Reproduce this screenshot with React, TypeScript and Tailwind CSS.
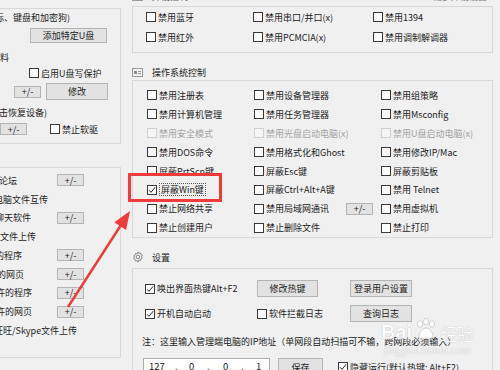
import type { ReactNode } from "react";

function Box({ on, off }: { on?: boolean; off?: boolean }) {
  return (
    <span
      className={`flex h-[10px] w-[10px] shrink-0 items-center justify-center border ${
        off ? "border-[#cfcfcf] bg-[#f5f5f5]" : "border-[#3a3a3a] bg-white"
      }`}
    >
      {on && (
        <svg width="8" height="8" viewBox="0 0 8 8">
          <path d="M1 4.2 3 6.3 7.2 1.2" fill="none" stroke="#2a2a2a" strokeWidth="1" />
        </svg>
      )}
    </span>
  );
}

function Check({
  label,
  on,
  off,
  focus,
}: {
  label: string;
  on?: boolean;
  off?: boolean;
  focus?: boolean;
}) {
  return (
    <div className="flex h-full items-center gap-[2px] whitespace-nowrap">
      <Box on={on} off={off} />
      <span
        className={`${off ? "text-[#a3a3a3]" : ""} ${
          focus ? "border border-dotted border-[#555] px-[1px] py-[1px]" : ""
        }`}
      >
        {label}
      </span>
    </div>
  );
}

function Btn({ children, className }: { children: ReactNode; className: string }) {
  return (
    <div
      className={`flex shrink-0 items-center justify-center border border-[#b4b4b4] bg-[#e2e2e2] text-[#222] ${className}`}
    >
      {children}
    </div>
  );
}

const Pm = () => <Btn className="h-[12px] w-[27px]">+/-</Btn>;

function LeftColumn() {
  const rows: { t: string; ml: string; pm?: boolean }[] = [
    { t: "论坛", ml: "ml-[-1px]", pm: true },
    { t: "电脑文件互传", ml: "ml-[-6px]" },
    { t: "聊天软件", ml: "ml-[-5px]", pm: true },
    { t: "文件上传", ml: "ml-[0px]" },
    { t: "的程序", ml: "ml-[-5px]", pm: true },
    { t: "的网页", ml: "ml-[-3px]", pm: true },
    { t: "许的程序", ml: "ml-[-4px]", pm: true },
    { t: "许的网页", ml: "ml-[-4px]", pm: true },
    { t: "旺旺/Skype文件上传", ml: "ml-[-6px]" },
  ];
  return (
    <div className="w-[121px] shrink-0 pt-[8px]">
      <div className="h-[136px] border-y border-r border-[#d8d8d8]">
        <div className="flex h-[16px] items-center whitespace-nowrap">
          <span className="ml-[-14px]">鼠标、键盘和加密狗)</span>
        </div>
        <Btn className="ml-[30px] mt-[3px] h-[15px] w-[77px]">添加特定U盘</Btn>
        <div className="mt-[7px] flex h-[14px] items-center whitespace-nowrap">
          <span className="ml-[-9px]">资料</span>
        </div>
        <div className="mt-[2px] h-[14px] pl-[29px]">
          <Check label="启用U盘写保护" />
        </div>
        <div className="mt-[3px] flex h-[17px] items-center">
          <div className="ml-[14px]">
            <Pm />
          </div>
          <Btn className="ml-[5px] h-[17px] w-[62px]">修改</Btn>
        </div>
        <div className="mt-[5px] flex h-[14px] items-center whitespace-nowrap">
          <span className="ml-[-10px]">点击恢复设备)</span>
        </div>
        <div className="mt-[3px] flex h-[14px] items-center">
          <Pm />
          <div className="ml-[23px] h-full">
            <Check label="禁止软驱" />
          </div>
        </div>
      </div>
      <div className="mt-[23px] h-[191px] border-y border-r border-[#d8d8d8] pt-[3px]">
        {rows.map((r) => (
          <div key={r.t} className="grid h-[18.75px] grid-cols-[57px_27px] items-center">
            <span className={`whitespace-nowrap ${r.ml}`}>{r.t}</span>
            {r.pm ? <Pm /> : <span />}
          </div>
        ))}
      </div>
    </div>
  );
}

function OsIcon() {
  return (
    <svg width="11" height="9" viewBox="0 0 11 9">
      <rect x="0.5" y="0.5" width="10" height="8" fill="#f4f4f4" stroke="#9a9a9a" />
      <rect x="2" y="3" width="3" height="3" fill="#8a8a8a" />
      <path d="M6 3.5h3M6 5.5h3" stroke="#9a9a9a" />
    </svg>
  );
}

function Gear() {
  return (
    <svg width="12" height="12" viewBox="0 0 24 24" fill="none" stroke="#8a8a8a" strokeWidth="2">
      <path d="M12 1.8l1.6 2.9 3.2-.9.9 3.2 2.9 1.6-1.6 2.9 1.6 2.9-2.9 1.6-.9 3.2-3.2-.9L12 22.2l-1.6-2.9-3.2.9-.9-3.2-2.9-1.6L5 12.5 3.4 9.6l2.9-1.6.9-3.2 3.2.9z" />
      <circle cx="12" cy="12" r="3.6" />
    </svg>
  );
}

const osRows: [string, boolean?][][] = [
  [["禁用注册表"], ["禁用设备管理器"], ["禁用组策略"]],
  [["禁用计算机管理"], ["禁用任务管理器"], ["禁用Msconfig"]],
  [["禁用安全模式", true], ["禁用光盘启动电脑(x)", true], ["禁用U盘启动电脑(x)", true]],
  [["禁用DOS命令"], ["禁用格式化和Ghost"], ["禁用修改IP/Mac"]],
  [["屏蔽PrtScn键"], ["屏蔽Esc键"], ["屏蔽剪贴板"]],
  [["屏蔽Win键"], ["屏蔽Ctrl+Alt+A键"], ["禁用 Telnet"]],
  [["禁止网络共享"], ["禁用局域网通讯"], ["禁用虚拟机"]],
  [["禁止创建用户"], ["禁止删除文件"], ["禁止打印"]],
];

function RightColumn() {
  return (
    <div className="ml-[11px] w-[361px] shrink-0">
      <div className="h-[6px] overflow-hidden">
        <div className="mt-[-9px] flex h-[11px] items-center text-[#666]">
          <OsIcon />
          <span className="ml-[9px]">外设控制</span>
          <span className="ml-auto mr-[6px] text-[#888]">更多外设设置</span>
        </div>
      </div>
      <div className="h-[47px] border border-[#d8d8d8] pl-[13px] pt-0">
        <div className="grid grid-cols-[107px_120px_1fr] auto-rows-[20px]">
          <Check label="禁用蓝牙" />
          <Check label="禁用串口/并口(x)" />
          <Check label="禁用1394" />
          <Check label="禁用红外" />
          <Check label="禁用PCMCIA(x)" />
          <Check label="禁用调制解调器" />
        </div>
      </div>
      <div className="flex h-[27px] items-center gap-[9px] pt-[11px]">
        <OsIcon />
        <span>操作系统控制</span>
      </div>
      <div className="h-[158px] border border-[#d8d8d8] pl-[14px] pt-[5px]">
        <div className="grid grid-cols-[107px_127px_1fr] auto-rows-[18.9px]">
          {osRows.map((row, i) =>
            row.map(([label, off], j) => (
              <div key={`${i}-${j}`} className="flex h-full items-center pr-[8px]">
                <Check label={label} off={off} on={label === "屏蔽Win键"} focus={label === "屏蔽Win键"} />
                {label === "禁用局域网通讯" && (
                  <div className="ml-auto">
                    <Pm />
                  </div>
                )}
              </div>
            )),
          )}
        </div>
      </div>
      <div className="flex h-[30px] items-center gap-[8px] pt-[8px]">
        <Gear />
        <span>设置</span>
      </div>
      <div className="h-[120px] border border-[#d8d8d8] pl-[12px] pt-[11px]">
        <div className="flex h-[17px] items-center">
          <div className="h-full w-[112px]">
            <Check label="唤出界面热键Alt+F2" on />
          </div>
          <Btn className="h-[17px] w-[61px]">修改热键</Btn>
          <Btn className="ml-[32px] h-[17px] w-[62px]">登录用户设置</Btn>
        </div>
        <div className="mt-[8px] flex h-[17px] items-center">
          <div className="h-full w-[112px]">
            <Check label="开机自动启动" on />
          </div>
          <div className="h-full w-[93px]">
            <Check label="软件拦截日志" />
          </div>
          <Btn className="h-[17px] w-[62px]">查询日志</Btn>
        </div>
        <div className="mt-[13px] flex h-[12px] items-center whitespace-nowrap">
          <span className="ml-[-3px]">注：这里输入管理端电脑的IP地址（单网段自动扫描可不输，跨网段必须输入）</span>
        </div>
        <div className="mt-[11px] flex h-[18px] items-center">
          <div className="ml-[-2px] flex h-[18px] w-[127px] items-center border border-[#acacac] bg-white pl-[5px] text-[9.5px]">
            <span className="w-[26px]">127</span>
            <span className="w-[14px]">.</span>
            <span className="w-[18px]">0</span>
            <span className="w-[16px]">.</span>
            <span className="w-[18px]">0</span>
            <span className="w-[15px]">.</span>
            <span>1</span>
          </div>
          <Btn className="ml-[8px] h-[18px] w-[45px]">保存</Btn>
          <div className="ml-[15px] h-full">
            <Check label="隐藏运行(默认热键: Alt+F2)" on />
          </div>
        </div>
      </div>
    </div>
  );
}

export default function App() {
  return (
    <div className="relative flex h-[370px] w-[500px] overflow-hidden bg-[#f0f0f0] font-['Noto_Sans_CJK_SC','Noto_Sans',sans-serif] text-[9px] leading-none text-[#1c1c1c]">
      <LeftColumn />
      <RightColumn />

      {/* red highlight box + arrow drawn on top of the screenshot */}
      <div className="absolute left-[128px] top-[173px] h-[29px] w-[94px] border-[3px] border-[#ef3b3b]" />
      <svg className="pointer-events-none absolute left-0 top-0" width="500" height="370">
        <line x1="68" y1="307" x2="121" y2="225" stroke="#ef3b3b" strokeWidth="2.5" />
        <polygon points="130,211 126.1,229.9 114.3,222.3" fill="#ef3b3b" />
      </svg>

      {/* watermark */}
      <div className="pointer-events-none absolute left-[381px] top-[318px] flex flex-col items-center text-white opacity-85 [text-shadow:0_0_1px_#9a9a9a]">
        <div className="flex items-end gap-[2px] font-['Liberation_Sans',sans-serif]">
          <span className="text-[20px] font-bold leading-none">Bai</span>
          <svg width="24" height="22" viewBox="0 0 24 22" className="mb-[2px]">
            <g fill="#fff" stroke="#b0b0b0" strokeWidth="0.6">
              <ellipse cx="6" cy="6" rx="2.6" ry="3.4" />
              <ellipse cx="12" cy="3.6" rx="2.6" ry="3.2" />
              <ellipse cx="18" cy="6" rx="2.6" ry="3.4" />
              <path d="M5 18c0-4 4-8 7-8s7 4 7 8c0 3-3 3-7 3s-7 0-7-3z" />
            </g>
          </svg>
          <span className="font-['Noto_Sans_CJK_SC',sans-serif] text-[17px] leading-none">经验</span>
        </div>
        <span className="mt-[3px] text-[10px] leading-none">jingyan.baidu.com</span>
      </div>
    </div>
  );
}
